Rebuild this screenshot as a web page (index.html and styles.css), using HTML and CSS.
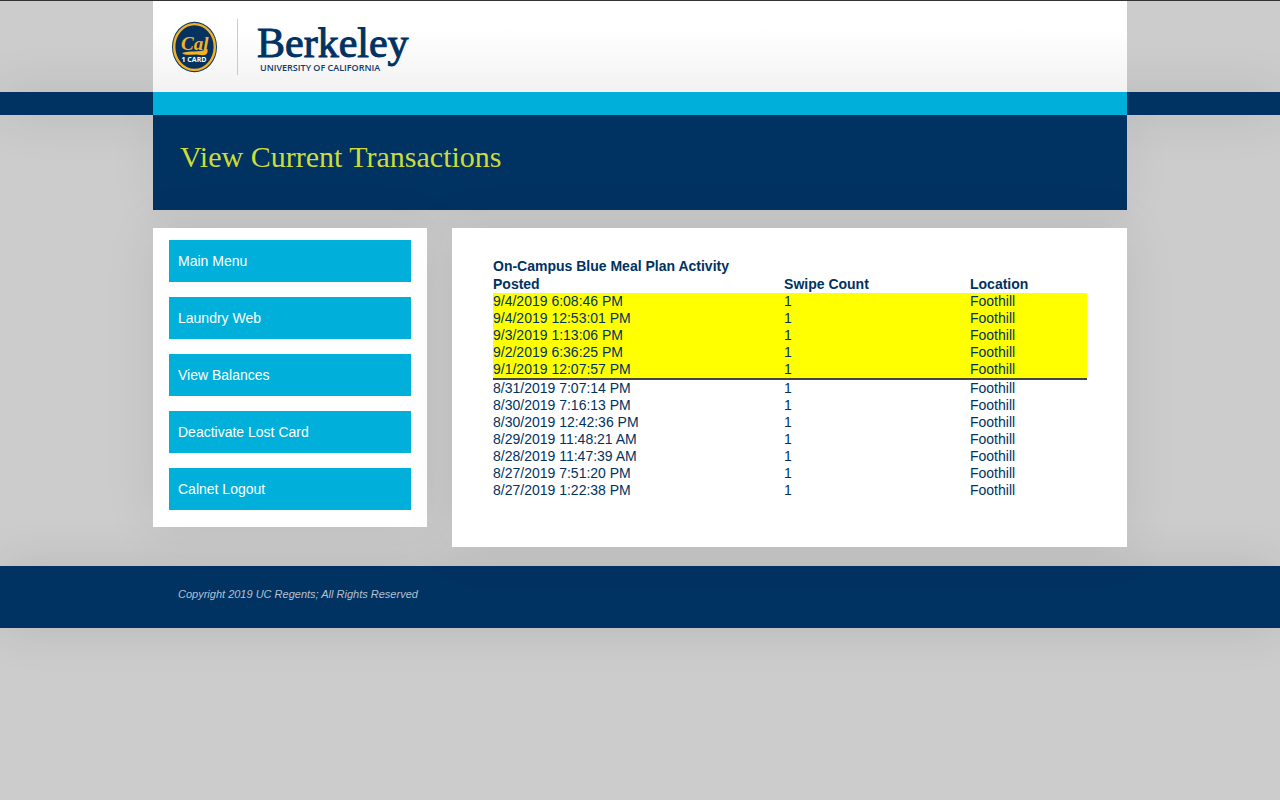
FILE: index.html
```html
<!DOCTYPE html>
<html lang="en">
<head>
<meta charset="utf-8">
<meta name="viewport" content="width=device-width, initial-scale=1">
<title>View Current Transactions</title>
<link rel="stylesheet" href="styles.css">
</head>
<body>
<header class="site-header">
  <div class="container brand">
    <svg class="seal" viewBox="0 0 46 52" width="46" height="52" role="img" aria-label="Cal 1 Card">
      <ellipse cx="22.5" cy="26" rx="22.5" ry="25.3" fill="#123a68"/>
      <ellipse cx="22.5" cy="26" rx="20.3" ry="22.9" fill="#06325f" stroke="#f5b324" stroke-width="2.4"/>
      <text x="9" y="29" class="seal-script">Cal</text>
      <path d="M10 32 C18 29 27 32 35 28 C37 32 34 35 29 34 C22 32 15 36 10 32Z" fill="#f5b324"/>
      <text x="22" y="41" text-anchor="middle" class="seal-label">1 CARD</text>
    </svg>
    <span class="divider"></span>
    <svg class="wordmark" viewBox="0 0 154 58" width="154" height="58" role="img" aria-label="Berkeley University of California">
      <text x="0" y="39" class="wordmark-name">Berkeley</text>
      <text x="3" y="53" class="wordmark-sub">UNIVERSITY OF CALIFORNIA</text>
    </svg>
  </div>
</header>
<div class="band"><div class="container band-accent"></div></div>
<div class="container title-bar"><h1>View Current Transactions</h1></div>
<div class="container columns">
  <nav class="panel menu" aria-label="Main">
    <a href="#">Main Menu</a>
    <a href="#">Laundry Web</a>
    <a href="#">View Balances</a>
    <a href="#">Deactivate Lost Card</a>
    <a href="#">Calnet Logout</a>
  </nav>
  <main class="panel content">
    <table class="activity">
      <caption>On-Campus Blue Meal Plan Activity</caption>
      <thead><tr><th class="posted" scope="col">Posted</th><th scope="col">Swipe Count</th><th class="location" scope="col">Location</th></tr></thead>
      <tbody class="highlight">
        <tr><td>9/4/2019 6:08:46 PM</td><td>1</td><td>Foothill</td></tr>
        <tr><td>9/4/2019 12:53:01 PM</td><td>1</td><td>Foothill</td></tr>
        <tr><td>9/3/2019 1:13:06 PM</td><td>1</td><td>Foothill</td></tr>
        <tr><td>9/2/2019 6:36:25 PM</td><td>1</td><td>Foothill</td></tr>
        <tr class="last"><td>9/1/2019 12:07:57 PM</td><td>1</td><td>Foothill</td></tr>
      </tbody>
      <tbody>
        <tr><td>8/31/2019 7:07:14 PM</td><td>1</td><td>Foothill</td></tr>
        <tr><td>8/30/2019 7:16:13 PM</td><td>1</td><td>Foothill</td></tr>
        <tr><td>8/30/2019 12:42:36 PM</td><td>1</td><td>Foothill</td></tr>
        <tr><td>8/29/2019 11:48:21 AM</td><td>1</td><td>Foothill</td></tr>
        <tr><td>8/28/2019 11:47:39 AM</td><td>1</td><td>Foothill</td></tr>
        <tr><td>8/27/2019 7:51:20 PM</td><td>1</td><td>Foothill</td></tr>
        <tr><td>8/27/2019 1:22:38 PM</td><td>1</td><td>Foothill</td></tr>
      </tbody>
    </table>
  </main>
</div>
<footer class="site-footer"><div class="container"><p>Copyright 2019 UC Regents; All Rights Reserved</p></div></footer>
</body>
</html>
```
FILE: styles.css
```css
* { box-sizing: border-box; }
body {
  margin: 0;
  min-height: 100vh;
  background: #ccc;
  color: #003262;
  font-family: "Liberation Sans", Arial, sans-serif;
  font-size: 14px;
}
.container { width: 100%; max-width: 974px; margin: 0 auto; }
.site-header { border-top: 1px solid #333; }
.brand {
  position: relative;
  z-index: 1;
  display: flex;
  align-items: center;
  gap: 19px;
  padding: 17px 19px 16px;
  background: linear-gradient(#fff 30%, #f2f2f2);
}
.divider { flex: none; width: 1px; height: 56px; background: #fbc75c; }
.seal-script { font: italic bold 19px "Liberation Serif", serif; fill: #f5b324; }
.seal-label { font: bold 7px "Open Sans", sans-serif; fill: #fff; }
.wordmark-name { font: 42px "Liberation Serif", serif; fill: #003262; stroke: #003262; stroke-width: 1px; }
.wordmark-sub { font: 600 9px "Open Sans", sans-serif; fill: #123a68; }
.band { background: #003262; box-shadow: 0 0 50px rgba(0, 0, 0, 0.12); }
.band-accent { height: 23px; background: #00b0da; }
.title-bar {
  position: relative;
  padding: 24px 27px 36px;
  background: #003262;
  box-shadow: 0 0 50px rgba(0, 0, 0, 0.06);
  clip-path: inset(0 -60px -60px);
}
h1 {
  margin: 0;
  color: #cddc39;
  font: 30px/35px "Liberation Serif", "Times New Roman", serif;
}
.columns {
  display: flex;
  flex-wrap: wrap;
  align-items: flex-start;
  gap: 25px;
  padding: 18px 0 19px;
}
.panel { position: relative; z-index: 1; background: #fff; box-shadow: 0 0 50px rgba(0, 0, 0, 0.08); }
.menu { display: grid; flex: 0 0 274px; gap: 15px; padding: 12px 16px 17px; }
.menu a { padding: 13px 9px; background: #00b0da; color: #fff; line-height: 16px; text-decoration: none; }
.content { flex: 1; padding: 30px 40px 48px 41px; }
.activity {
  width: 100%;
  table-layout: fixed;
  border-collapse: collapse;
  font-size: 14px;
  line-height: 17px;
}
.activity caption { padding-bottom: 1px; font-weight: bold; text-align: left; }
.activity th, .activity td { padding: 0; text-align: left; }
.posted { width: 49%; }
.location { width: 117px; }
.highlight { background: #ff0; }
.last td { border-bottom: 2px solid #444; }
.site-footer {
  position: relative;
  background: #003262;
  box-shadow: 0 0 50px rgba(0, 0, 0, 0.1);
}
.site-footer p {
  margin: 0;
  padding: 20px 25px 26px;
  color: #b3c1d0;
  font-size: 11px;
  font-style: italic;
  line-height: 16px;
}
```
